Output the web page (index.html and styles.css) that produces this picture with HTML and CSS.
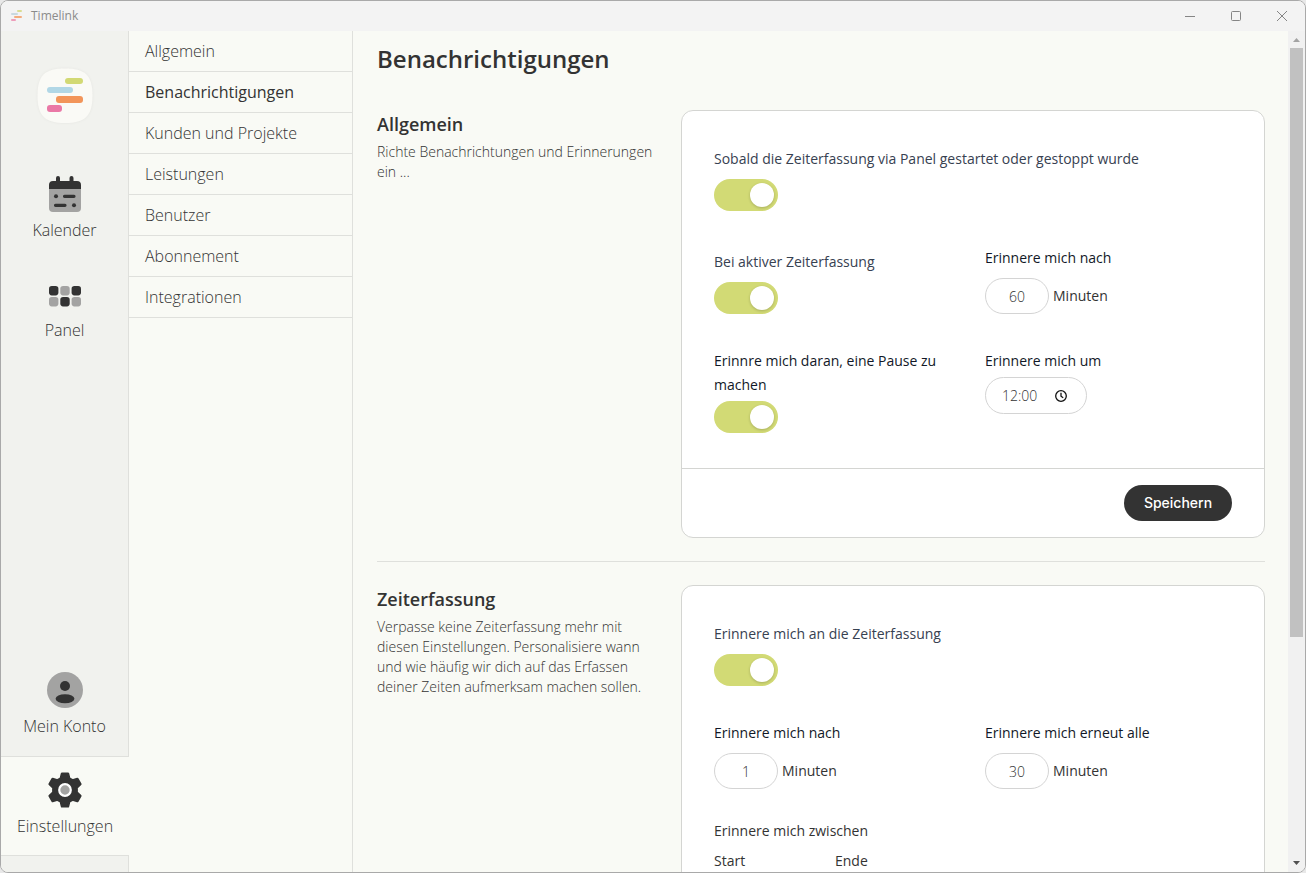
FILE: index.html
```html
<!DOCTYPE html>
<html lang="de">
<head>
<meta charset="utf-8">
<meta name="viewport" content="width=device-width, initial-scale=1">
<title>Timelink</title>
<link rel="stylesheet" href="styles.css">
</head>
<body>
<div class="window">
  <header class="titlebar">
    <svg class="titlebar-logo" viewBox="0 0 12 12" aria-hidden="true">
      <rect x="6" y="0" width="5" height="2" rx="1" fill="#d9dd92"/>
      <rect x="0" y="3" width="7" height="2" rx="1" fill="#c9d9df"/>
      <rect x="3" y="6" width="8" height="2" rx="1" fill="#f3ab7c"/>
      <rect x="0" y="9" width="5" height="2" rx="1" fill="#ee9dba"/>
    </svg>
    <span class="titlebar-name">Timelink</span>
    <div class="window-controls">
      <button class="window-button" aria-label="Minimieren"><svg viewBox="0 0 12 12"><path d="M1 6.500h10"/></svg></button>
      <button class="window-button" aria-label="Maximieren"><svg viewBox="0 0 12 12"><rect x="1.500" y="1.500" width="9" height="9" rx="1"/></svg></button>
      <button class="window-button" aria-label="Schließen"><svg viewBox="0 0 12 12"><path d="M1 1l10 10M11 1L1 11"/></svg></button>
    </div>
  </header>

  <div class="app">
    <nav class="sidebar" aria-label="Hauptmenü">
      <svg class="logo" viewBox="0 0 60 60" aria-hidden="true">
        <path class="logo-tile" d="M30 2.500C50 2.500 57.500 9 57.500 29.500S50 57 30 57 2.500 50 2.500 29.500 10 2.500 30 2.500Z"/>
        <rect x="30" y="12" width="18" height="6" rx="3" fill="#d2d974"/>
        <rect x="12" y="21" width="26" height="6" rx="3" fill="#b1d7e6"/>
        <rect x="21" y="30" width="27" height="7" rx="3" fill="#f2955a"/>
        <rect x="12" y="39" width="15" height="7" rx="3" fill="#ea78a6"/>
      </svg>
      <a class="side-item" href="#kalender">
        <svg class="side-icon" viewBox="0 0 36 36" aria-hidden="true">
          <path fill="#a3a3a2" d="M2 13h32v19a4 4 0 0 1-4 4H6a4 4 0 0 1-4-4z"/>
          <path fill="#333" d="M2 13V9a4 4 0 0 1 4-4h3V2a2 2 0 0 1 4 0v3h9.500V2a2 2 0 0 1 4 0v3H30a4 4 0 0 1 4 4v4z"/>
          <g stroke="#333" stroke-width="3.200" stroke-linecap="round"><path d="M17.500 20.300h9.500M8.500 29.300h9.500"/></g>
          <g fill="#333"><circle cx="9" cy="20.300" r="2"/><circle cx="27" cy="29.300" r="2"/></g>
        </svg>
        <span>Kalender</span>
      </a>
      <a class="side-item" href="#panel">
        <svg class="side-icon" viewBox="0 0 36 36" aria-hidden="true">
          <g fill="#333"><rect x="2" y="10" width="9.400" height="9.400" rx="2.800"/><rect x="24.600" y="10" width="9.400" height="9.400" rx="2.800"/><rect x="13.300" y="21" width="9.400" height="9.400" rx="2.800"/></g>
          <g fill="#a3a3a2"><rect x="13.300" y="10" width="9.400" height="9.400" rx="2.800"/><rect x="2" y="21" width="9.400" height="9.400" rx="2.800"/><rect x="24.600" y="21" width="9.400" height="9.400" rx="2.800"/></g>
        </svg>
        <span>Panel</span>
      </a>
      <a class="side-item side-item-account" href="#konto">
        <svg class="side-icon" viewBox="0 0 36 36" aria-hidden="true">
          <circle cx="18" cy="18" r="18" fill="#a3a3a2"/>
          <circle cx="18" cy="14" r="5" fill="#333"/>
          <ellipse cx="18" cy="26.700" rx="9.400" ry="4.500" fill="#333"/>
        </svg>
        <span>Mein Konto</span>
      </a>
      <a class="side-item side-item-active" href="#einstellungen" aria-current="page">
        <svg class="side-icon" viewBox="0 0 36 36" aria-hidden="true">
          <path fill="#333" stroke="#333" stroke-width="2.400" stroke-linejoin="round" d="M15 1.600h6l1.300 4.900 3.300 1.900 4.800-1.500 3 5.200-3.700 3.600v4.600l3.700 3.600-3 5.200-4.800-1.500-3.300 1.900-1.300 4.900h-6l-1.300-4.900-3.300-1.900-4.800 1.500-3-5.200 3.700-3.600v-4.600l-3.700-3.600 3-5.200 4.800 1.500 3.300-1.900z"/>
          <circle cx="18" cy="18" r="5.800" fill="#a3a3a2" stroke="#fff" stroke-width="2.200"/>
        </svg>
        <span>Einstellungen</span>
      </a>
    </nav>

    <nav class="subnav" aria-label="Einstellungen">
      <a class="subnav-item" href="#allgemein">Allgemein</a>
      <a class="subnav-item subnav-item-active" href="#benachrichtigungen" aria-current="page">Benachrichtigungen</a>
      <a class="subnav-item" href="#projekte">Kunden und Projekte</a>
      <a class="subnav-item" href="#leistungen">Leistungen</a>
      <a class="subnav-item" href="#benutzer">Benutzer</a>
      <a class="subnav-item" href="#abonnement">Abonnement</a>
      <a class="subnav-item" href="#integrationen">Integrationen</a>
    </nav>

    <main class="content">
      <h1 class="page-title">Benachrichtigungen</h1>

      <section class="section">
        <div class="section-intro">
          <h2 class="section-title">Allgemein</h2>
          <p class="section-text">Richte Benachrichtungen und Erinnerungen ein ...</p>
        </div>
        <form class="card">
          <div class="card-body">
            <div class="field">
              <label class="label label-soft" for="panel">Sobald die Zeiterfassung via Panel gestartet oder gestoppt wurde</label>
              <input class="toggle" type="checkbox" role="switch" id="panel" checked>
            </div>
            <div class="row row-end">
              <div class="field">
                <label class="label label-soft" for="aktiv">Bei aktiver Zeiterfassung</label>
                <input class="toggle" type="checkbox" role="switch" id="aktiv" checked>
              </div>
              <div class="field">
                <label class="label" for="aktiv-nach">Erinnere mich nach</label>
                <div class="amount"><input class="number" type="number" id="aktiv-nach" value="60"><span>Minuten</span></div>
              </div>
            </div>
            <div class="row">
              <div class="field field-tight">
                <label class="label" for="pause">Erinnre mich daran, eine Pause zu machen</label>
                <input class="toggle" type="checkbox" role="switch" id="pause" checked>
              </div>
              <div class="field field-tight">
                <label class="label" for="pause-um">Erinnere mich um</label>
                <div class="time">
                  <input class="time-input" type="text" id="pause-um" value="12:00">
                  <svg class="time-icon" viewBox="0 0 12 12" aria-hidden="true"><circle cx="6" cy="6" r="5.300"/><path d="M6 2.800V6.200l2.200 1.600"/></svg>
                </div>
              </div>
            </div>
          </div>
          <div class="card-footer"><button class="save" type="button">Speichern</button></div>
        </form>
      </section>

      <hr class="divider">

      <section class="section">
        <div class="section-intro">
          <h2 class="section-title">Zeiterfassung</h2>
          <p class="section-text">Verpasse keine Zeiterfassung mehr mit diesen Einstellungen. Personalisiere wann und wie häufig wir dich auf das Erfassen deiner Zeiten aufmerksam machen sollen.</p>
        </div>
        <form class="card">
          <div class="card-body">
            <div class="field">
              <label class="label label-soft" for="erinnern">Erinnere mich an die Zeiterfassung</label>
              <input class="toggle" type="checkbox" role="switch" id="erinnern" checked>
            </div>
            <div class="schedule">
              <div class="row">
                <div class="field">
                  <label class="label" for="nach">Erinnere mich nach</label>
                  <div class="amount"><input class="number" type="number" id="nach" value="1"><span>Minuten</span></div>
                </div>
                <div class="field">
                  <label class="label" for="erneut">Erinnere mich erneut alle</label>
                  <div class="amount"><input class="number" type="number" id="erneut" value="30"><span>Minuten</span></div>
                </div>
              </div>
              <div class="range">
                <p class="range-title">Erinnere mich zwischen</p>
                <div class="range-ends"><span>Start</span><span>Ende</span></div>
              </div>
            </div>
          </div>
        </form>
      </section>
    </main>

    <div class="scrollbar" aria-hidden="true">
      <svg class="scroll-arrow scroll-arrow-up" viewBox="0 0 17 17"><path d="M5 11h7L8.500 7z"/></svg>
      <div class="scroll-track"><div class="scroll-thumb"></div></div>
      <svg class="scroll-arrow" viewBox="0 0 17 17"><path d="M5 6h7L8.500 10z"/></svg>
    </div>
  </div>
</div>
</body>
</html>
```
FILE: styles.css
```css
* { box-sizing: border-box; }

body {
  margin: 0;
  background: #e8e8e8;
  color: #333;
  font: 300 16px/24px "Open Sans", sans-serif;
}

h1, h2, p { margin: 0; }
a { color: inherit; text-decoration: none; }
button, input { font: inherit; color: inherit; }

.window {
  display: flex;
  flex-direction: column;
  height: 100vh;
  overflow: hidden;
  border: 1px solid #a9a9a9;
  border-radius: 8px;
  background: #f9faf5;
}

/* Title bar */
.titlebar {
  display: flex;
  flex: none;
  align-items: center;
  height: 30px;
  padding-left: 10px;
  background: #f3f3f3;
  color: #8b8b8b;
  font: 400 12px/16px "Open Sans", sans-serif;
}
.titlebar-logo { width: 12px; height: 12px; margin-right: 8px; }
.window-controls { display: flex; margin-left: auto; }
.window-button {
  display: grid;
  place-items: center;
  width: 46px;
  height: 30px;
  padding: 0;
  border: 0;
  background: none;
}
.window-button svg { width: 12px; height: 12px; fill: none; stroke: #858585; stroke-width: 1; }

.app { display: flex; flex: 1; min-height: 0; }

/* Main navigation */
.sidebar {
  display: flex;
  flex: none;
  flex-direction: column;
  width: 128px;
  padding: 35px 0 16px;
  border-right: 1px solid #dfe0dc;
  background: #f1f2ee;
}
.logo { flex: none; align-self: center; width: 60px; height: 60px; margin-bottom: 34px; }
.logo-tile { fill: #fafaf6; filter: drop-shadow(0 0 1px #e4e4e0); }
.side-item {
  display: flex;
  flex: none;
  flex-direction: column;
  align-items: center;
  gap: 6px;
  padding: 15px 0 17px;
  border: solid transparent;
  border-width: 1px 0;
}
.side-icon { width: 36px; height: 36px; }
.side-item-account { margin-top: auto; }
.side-item-active {
  margin-right: -1px;
  border-color: #dfe0dc;
  background: #f9faf5;
}

/* Settings navigation */
.subnav { flex: none; width: 224px; border-right: 1px solid #dfe0dc; }
.subnav-item {
  display: block;
  padding: 8px 16px;
  border-bottom: 1px solid #dfe0dc;
}
.subnav-item-active { font-weight: 400; }

/* Content */
.content { flex: 1; min-width: 0; overflow: hidden; padding: 12px 23px 24px 24px; }
.page-title { margin-bottom: 35px; font-size: 24px; line-height: 32px; font-weight: 600; }
.section { display: grid; grid-template-columns: repeat(3, 1fr); gap: 24px; }
.section-title { font-size: 18px; line-height: 28px; font-weight: 600; }
.section-text { margin-top: 4px; font-size: 14px; line-height: 20px; }
.divider { margin: 23px 0; border: 0; border-top: 1px solid #dfe0dc; }

.card {
  grid-column: span 2;
  overflow: hidden;
  border: 1px solid #d4d5d2;
  border-radius: 12px;
  background: #fff;
  font-size: 14px;
  font-weight: 400;
}
.card-body { display: grid; gap: 35px; padding: 36px 32px 35px; }
.card-footer {
  display: flex;
  justify-content: flex-end;
  padding: 16px 32px;
  border-top: 1px solid #d4d5d2;
}
.row { display: grid; grid-template-columns: 1fr 1fr; gap: 24px; }
.row-end { align-items: end; }
.field { display: flex; flex-direction: column; align-items: flex-start; gap: 8px; }
.field-tight { gap: 4px; }
.label { color: #111827; }
.label-soft { color: #374151; }

.toggle {
  appearance: none;
  width: 64px;
  height: 32px;
  margin: 0;
  padding: 4px;
  border-radius: 16px;
  background: #d1d5db;
}
.toggle::before {
  content: "";
  display: block;
  width: 24px;
  height: 24px;
  border-radius: 50%;
  background: #fff;
  box-shadow: 0 1px 3px #0003;
}
.toggle:checked { background: #d2da75; }
.toggle:checked::before { margin-left: auto; }

.amount { display: flex; align-items: center; gap: 4px; }
.number {
  appearance: textfield;
  width: 64px;
  height: 36px;
  padding: 0 8px;
  border: 1px solid #d4d4d4;
  border-radius: 18px;
  background: #fff;
  font-weight: 300;
  text-align: center;
}
.number::-webkit-inner-spin-button { appearance: none; margin: 0; }

.time {
  display: flex;
  align-items: center;
  width: 102px;
  height: 37px;
  padding: 0 19px 0 16px;
  border: 1px solid #d4d4d4;
  border-radius: 19px;
}
.time-input {
  flex: 1;
  min-width: 0;
  padding: 0;
  border: 0;
  background: none;
  font-weight: 300;
}
.time-icon { flex: none; width: 12px; height: 12px; fill: none; stroke: #111; stroke-width: 1.3; }

.save {
  width: 108px;
  height: 36px;
  padding: 0;
  border: 0;
  border-radius: 18px;
  background: #333;
  color: #fff;
  font-family: Inter, sans-serif;
  font-weight: 500;
}

.schedule { display: grid; gap: 30px; }
.range { display: grid; gap: 6px; }
.range-ends { display: grid; grid-template-columns: 97px 1fr; gap: 24px; }

/* Scrollbar */
.scrollbar { display: flex; flex: none; flex-direction: column; width: 17px; background: #f1f1f1; }
.scroll-arrow { flex: none; width: 17px; height: 17px; fill: #505050; }
.scroll-arrow-up { fill: #a3a3a3; }
.scroll-track { flex: 1; padding: 0 2px; }
.scroll-thumb { height: 73%; background: #c1c1c1; }
```
